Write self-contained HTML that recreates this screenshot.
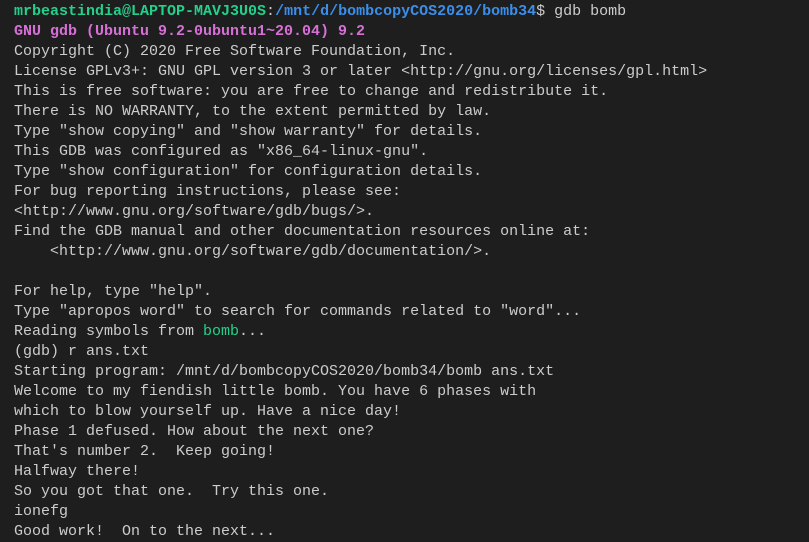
<!DOCTYPE html>
<html><head><style>
html,body{margin:0;padding:0;background:#1e1e1e;width:809px;height:542px;overflow:hidden}
pre{margin:0;padding:2px 0 0 14px;font-family:"Liberation Mono",monospace;font-size:15px;line-height:20px;color:#cccccc;white-space:pre}
.g{color:#23d18b;font-weight:bold}.b{color:#3b8eea;font-weight:bold}.m{color:#d670d6;font-weight:bold}.gn{color:#23d18b}
</style></head><body><pre><span class="g">mrbeastindia@LAPTOP-MAVJ3U0S</span>:<span class="b">/mnt/d/bombcopyCOS2020/bomb34</span>$ gdb bomb
<span class="m">GNU gdb (Ubuntu 9.2-0ubuntu1~20.04) 9.2</span>
Copyright (C) 2020 Free Software Foundation, Inc.
License GPLv3+: GNU GPL version 3 or later &lt;http://gnu.org/licenses/gpl.html&gt;
This is free software: you are free to change and redistribute it.
There is NO WARRANTY, to the extent permitted by law.
Type "show copying" and "show warranty" for details.
This GDB was configured as "x86_64-linux-gnu".
Type "show configuration" for configuration details.
For bug reporting instructions, please see:
&lt;http://www.gnu.org/software/gdb/bugs/&gt;.
Find the GDB manual and other documentation resources online at:
    &lt;http://www.gnu.org/software/gdb/documentation/&gt;.

For help, type "help".
Type "apropos word" to search for commands related to "word"...
Reading symbols from <span class="gn">bomb</span>...
(gdb) r ans.txt
Starting program: /mnt/d/bombcopyCOS2020/bomb34/bomb ans.txt
Welcome to my fiendish little bomb. You have 6 phases with
which to blow yourself up. Have a nice day!
Phase 1 defused. How about the next one?
That's number 2.  Keep going!
Halfway there!
So you got that one.  Try this one.
ionefg
Good work!  On to the next...</pre></body></html>
